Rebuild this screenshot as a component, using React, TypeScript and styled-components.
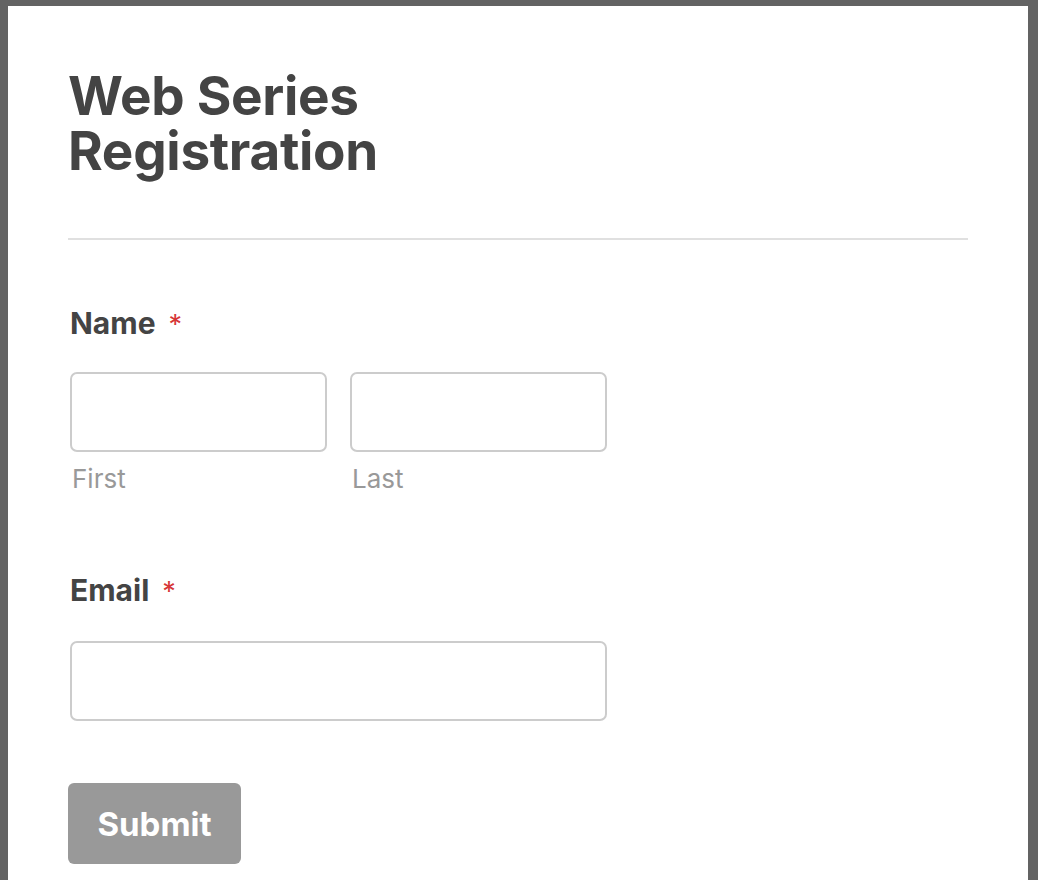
import styled, { createGlobalStyle } from 'styled-components';

const GlobalStyle = createGlobalStyle`
  html, body {
    margin: 0;
    background: #636363;
  }
  body {
    padding: 6px 10px 0 8px;
    font-family: Inter, "Noto Sans", "Liberation Sans", sans-serif;
    color: #444;
  }
`;

const Card = styled.main`
  background: #fff;
  min-height: 874px;
  padding: 63px 60px 0 60px;
  box-sizing: border-box;
`;

const Title = styled.h1`
  margin: 0;
  max-width: 420px;
  font-size: 53px;
  line-height: 55px;
  font-weight: 650;
  letter-spacing: -0.3px;
  color: #444;
`;

const Divider = styled.hr`
  margin: 59px 0 0;
  border: none;
  border-top: 2px solid #e0e0e0;
`;

const Form = styled.form`
  padding-left: 2px;
`;

const Field = styled.div<{ $top: number }>`
  margin-top: ${(p) => p.$top}px;
  width: 537px;
`;

const Label = styled.label`
  display: block;
  font-size: 30px;
  line-height: 36px;
  font-weight: 650;
  color: #444;
`;

const Required = styled.span`
  color: #d63637;
  font-weight: 400;
  font-size: 27px;
  margin-left: 13px;
`;

const Row = styled.div`
  display: grid;
  grid-template-columns: 1fr 1fr;
  column-gap: 23px;
  margin-top: 29px;
`;

const Input = styled.input`
  display: block;
  box-sizing: border-box;
  width: 100%;
  height: 80px;
  border: 2px solid #ccc;
  border-radius: 7px;
  background: #fff;
  font: inherit;
  outline: none;
`;

const SingleInput = styled(Input)`
  margin-top: 31px;
`;

const SubLabel = styled.span`
  display: block;
  margin-top: 11px;
  padding-left: 2px;
  font-size: 26px;
  line-height: 32px;
  color: #999;
`;

const SubmitButton = styled.button`
  display: block;
  margin: 62px 0 0 -2px;
  width: 173px;
  height: 81px;
  border: none;
  border-radius: 6px;
  background: #999;
  color: #fff;
  font-family: inherit;
  font-size: 33px;
  font-weight: 650;
  cursor: pointer;
`;

export default function App() {
  return (
    <>
      <GlobalStyle />
      <Card>
        <Title>Web Series Registration</Title>
        <Divider />
        <Form onSubmit={(e) => e.preventDefault()}>
          <Field $top={65}>
            <Label>
              Name<Required>*</Required>
            </Label>
            <Row>
              <div>
                <Input type="text" aria-label="First" />
                <SubLabel>First</SubLabel>
              </div>
              <div>
                <Input type="text" aria-label="Last" />
                <SubLabel>Last</SubLabel>
              </div>
            </Row>
          </Field>
          <Field $top={77}>
            <Label>
              Email<Required>*</Required>
            </Label>
            <SingleInput type="email" aria-label="Email" />
          </Field>
          <SubmitButton type="submit">Submit</SubmitButton>
        </Form>
      </Card>
    </>
  );
}
